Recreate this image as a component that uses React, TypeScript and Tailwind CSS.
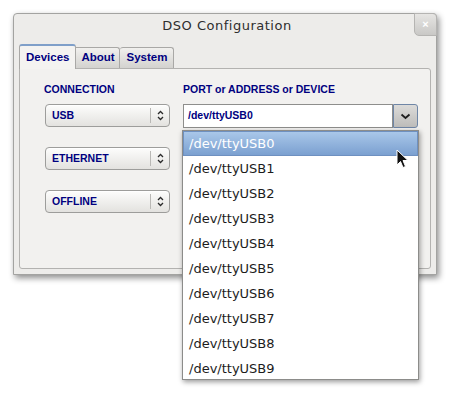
import React from "react";

const ports = Array.from({ length: 10 }, (_, i) => `/dev/ttyUSB${i}`);

const Stepper = ({ label }: { label: string }) => (
  <div className="flex items-center h-[23px] w-[125px] rounded-[4px] border border-[#9d9d9b] bg-gradient-to-b from-[#fdfdfc] to-[#e3e2df] shadow-[inset_0_1px_0_#ffffff]">
    <span className="flex-1 pl-[6px] text-[10.5px] font-bold text-[#000080] leading-none">{label}</span>
    <div className="w-px h-[15px] bg-[#b9b8b5]" />
    <div className="w-[18px] flex justify-center">
      <svg width="7" height="11" viewBox="0 0 7 11" fill="none" stroke="#2a2a2a" strokeWidth="1.3">
        <path d="M1 4 L3.5 1.5 L6 4" />
        <path d="M1 7 L3.5 9.5 L6 7" />
      </svg>
    </div>
  </div>
);

export default function App() {
  return (
    <div className="relative w-[450px] h-[393px] bg-white pl-[13px] pt-[13px] font-['Liberation_Sans',Arial,sans-serif]">
      {/* Dialog window */}
      <div className="w-[424px] h-[262px] flex flex-col bg-[#edecea] border border-[#a3a3a1] rounded-t-[4px] shadow-[2px_3px_6px_rgba(0,0,0,0.45)]">
        <div className="relative h-[22px] flex items-center justify-center">
          <span className="pl-[4px] pt-[2px] text-[13px] tracking-[0.5px] text-[#2e2e2e] font-['DejaVu_Sans',sans-serif]">
            DSO Configuration
          </span>
          <button className="absolute -right-px -top-px w-[23px] h-[23px] rounded-tr-[4px] rounded-bl-[5px] border border-[#b5b4b2] bg-gradient-to-b from-[#e6e5e3] to-[#c9c8c6] flex items-center justify-center text-[11px] font-bold text-white leading-none">
            ×
          </button>
        </div>

        <div className="flex-1 flex flex-col px-[5px] pt-[8px] pb-[5px]">
          {/* Tabs */}
          <div className="flex items-end h-[24px]">
            <div className="relative z-10 h-[25px] -mb-px px-[6px] flex items-center rounded-t-[3px] border border-b-0 border-[#a9a8a6] border-t-2 border-t-[#7f9fc9] bg-[#f4f3f1] text-[11.5px] font-bold text-[#000080]">
              Devices
            </div>
            <div className="h-[21px] w-[44px] flex items-center justify-center border border-l-0 border-b-0 border-[#a9a8a6] rounded-tr-[3px] bg-gradient-to-b from-[#f1f0ee] to-[#d3d2cf] text-[11.5px] font-bold text-[#000080]">
              About
            </div>
            <div className="h-[21px] w-[54px] flex items-center justify-center border border-l-0 border-b-0 border-[#a9a8a6] rounded-t-[3px] bg-gradient-to-b from-[#f1f0ee] to-[#d3d2cf] text-[11.5px] font-bold text-[#000080]">
              System
            </div>
          </div>

          {/* Pane */}
          <div className="flex-1 flex gap-[13px] border border-[#b3b2b0] rounded-b-[3px] rounded-tr-[3px] bg-[#f2f1ef] pl-[25px] pt-[14px]">
            <div className="flex flex-col w-[125px]">
              <div className="h-[12px] text-[10.5px] font-bold text-[#000080] leading-[12px] -ml-px">CONNECTION</div>
              <div className="mt-[9px] flex flex-col gap-[20px]">
                <Stepper label="USB" />
                <Stepper label="ETHERNET" />
                <Stepper label="OFFLINE" />
              </div>
            </div>
            <div className="flex flex-col w-[235px]">
              <div className="h-[12px] text-[10.5px] font-bold text-[#000080] leading-[12px]">PORT or ADDRESS or DEVICE</div>
              <div className="mt-[9px] flex h-[24px]">
                <div className="flex-1 flex items-center pl-[4px] bg-white border border-[#8e8e8c] text-[10.5px] font-bold text-[#000080]">
                  /dev/ttyUSB0
                </div>
                <div className="w-[25px] flex items-center justify-center rounded-r-[3px] border border-[#6f86a6] bg-gradient-to-b from-[#dcdbd9] to-[#bdbcba]">
                  <svg width="11" height="7" viewBox="0 0 11 7" fill="none" stroke="#1e1e1e" strokeWidth="1.8">
                    <path d="M1.5 1.5 L5.5 5 L9.5 1.5" />
                  </svg>
                </div>
              </div>
            </div>
          </div>
        </div>
      </div>

      {/* Popup list */}
      <div className="absolute left-[182px] top-[130px] w-[237px] h-[250px] bg-white border border-[#8c8c8a] shadow-[1px_2px_5px_rgba(0,0,0,0.4)] font-['DejaVu_Sans',sans-serif]">
        {ports.map((p, i) => (
          <div
            key={p}
            className={
              i === 0
                ? "h-[25px] flex items-center pl-[5px] text-[13px] text-white bg-gradient-to-b from-[#a9c7e9] to-[#7ba0d0] border border-[#6e90c0]"
                : "h-[25px] flex items-center pl-[6px] text-[13px] text-[#1c1c1c]"
            }
          >
            {p}
          </div>
        ))}
      </div>

      {/* Mouse cursor */}
      <svg className="absolute left-[396px] top-[149px]" width="13" height="20" viewBox="0 0 13 20">
        <path d="M1 1 L1 16 L4.5 12.5 L7 18.5 L9.5 17.5 L7 11.5 L12 11.5 Z" fill="#111" stroke="#fff" strokeWidth="1" strokeLinejoin="round" />
      </svg>
    </div>
  );
}
